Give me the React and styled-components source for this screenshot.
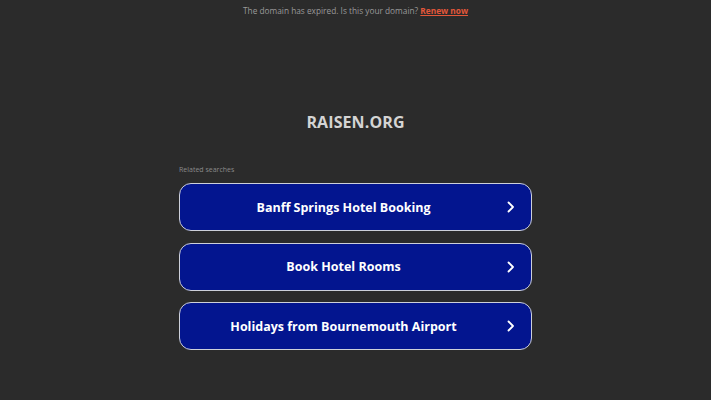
import React from "react";
import styled, { createGlobalStyle } from "styled-components";

const Global = createGlobalStyle`
  html, body { margin: 0; padding: 0; background: #2b2b2b; }
  body { font-family: "Open Sans", "Noto Sans", sans-serif; }
`;

const Page = styled.div`
  width: 711px;
  height: 400px;
  background: #2b2b2b;
  display: flex;
  flex-direction: column;
  align-items: center;
  overflow: hidden;
`;

const Notice = styled.div`
  margin-top: 5px;
  font-size: 8.3px;
  line-height: 12px;
  color: #9a9a9a;
  text-align: center;
`;

const Renew = styled.a`
  color: #e3573a;
  font-weight: 700;
  text-decoration: underline;
`;

const Title = styled.h1`
  margin: 94px 0 0;
  font-size: 16px;
  line-height: 22px;
  font-weight: 700;
  color: #d4d4d4;
  letter-spacing: 0.1px;
`;

const Section = styled.div`
  width: 353px;
  margin-top: 32px;
  display: flex;
  flex-direction: column;
`;

const Label = styled.div`
  font-size: 7px;
  line-height: 10px;
  color: #8a8a8a;
  margin-bottom: 8px;
`;

const List = styled.div`
  display: flex;
  flex-direction: column;
  gap: 11.5px;
`;

const Item = styled.a`
  box-sizing: border-box;
  height: 48px;
  border: 1.5px solid #cdd0da;
  border-radius: 12px;
  background: #03158f;
  display: flex;
  align-items: center;
  justify-content: center;
  padding-right: 24px;
  position: relative;
  color: #fff;
  font-size: 12.5px;
  font-weight: 700;
  text-decoration: none;
`;

const Chevron = styled.svg`
  position: absolute;
  right: 16px;
  top: 50%;
  transform: translateY(-50%);
`;

const items = [
  "Banff Springs Hotel Booking",
  "Book Hotel Rooms",
  "Holidays from Bournemouth Airport",
];

export default function App() {
  return (
    <>
      <Global />
      <Page>
        <Notice>
          The domain has expired. Is this your domain? <Renew>Renew now</Renew>
        </Notice>
        <Title>RAISEN.ORG</Title>
        <Section>
          <Label>Related searches</Label>
          <List>
            {items.map((t) => (
              <Item key={t}>
                {t}
                <Chevron width="8" height="12" viewBox="0 0 8 12">
                  <path d="M1.5 1.5 L6 6 L1.5 10.5" fill="none" stroke="#fff" strokeWidth="1.8" strokeLinecap="round" strokeLinejoin="round" />
                </Chevron>
              </Item>
            ))}
          </List>
        </Section>
      </Page>
    </>
  );
}
